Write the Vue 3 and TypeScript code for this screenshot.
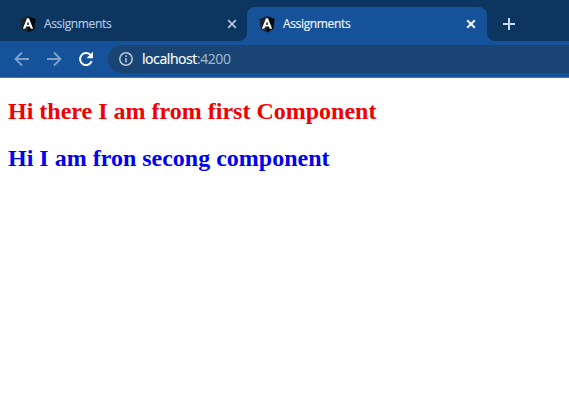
<script setup lang="ts">
interface Tab {
  id: number
  title: string
  active: boolean
}

const tabs: Tab[] = [
  { id: 1, title: 'Assignments', active: false },
  { id: 2, title: 'Assignments', active: true },
]
</script>

<template>
  <div class="browser">
    <header class="tab-strip">
      <div v-for="tab in tabs" :key="tab.id" class="tab" :class="{ active: tab.active }">
        <svg class="favicon" viewBox="0 0 16 17">
          <path d="M8 .3 15.5 3l-1.2 10L8 16.6 1.7 13 .5 3z" fill="#20242c" />
          <path d="M8 .3 15.5 3l-1.2 10L8 16.6z" fill="#080b12" />
          <path d="M7 2.2 2.9 12.8H5.3L6.1 10.6H9.9L10.7 12.8H13.1L9 2.2ZM8 5.4 9.2 8.7H6.8Z" fill="#fff" fill-rule="evenodd" />
        </svg>
        <span class="title">{{ tab.title }}</span>
        <svg class="close" viewBox="0 0 10 10">
          <path d="M1.2 1.2 8.8 8.8M8.8 1.2 1.2 8.8" />
        </svg>
      </div>
      <svg class="new-tab" viewBox="0 0 12 12">
        <path d="M6 0V12M0 6H12" />
      </svg>
    </header>

    <nav class="toolbar">
      <svg class="nav-icon dim" viewBox="0 0 16 16">
        <path d="M15 8H2M8 1.5 1.5 8 8 14.5" />
      </svg>
      <svg class="nav-icon dim" viewBox="0 0 16 16">
        <path d="M1 8H14M8 1.5 14.5 8 8 14.5" />
      </svg>
      <svg class="nav-icon reload" viewBox="0 0 16 16">
        <path d="M13.7 10.2A6 6 0 1 1 12.3 3.8" />
        <path class="head" d="M15 .8V7.3H8.5Z" />
      </svg>
      <div class="address">
        <svg class="info" viewBox="0 0 14 14">
          <circle cx="7" cy="7" r="6.2" />
          <path d="M7 6V10.5M7 3.3V4.9" />
        </svg>
        <span class="url">localhost<span class="port">:4200</span></span>
      </div>
    </nav>

    <main class="page">
      <h2 class="first">Hi there I am from first Component</h2>
      <h2 class="second">Hi I am fron secong component</h2>
    </main>
  </div>
</template>

<style>
body {
  margin: 0;
  background: #fff;
}
</style>

<style scoped>
.browser {
  height: 402px;
  overflow: hidden;
  background: #fff;
}

.tab-strip {
  display: flex;
  box-sizing: border-box;
  height: 41px;
  padding: 7px 0 0 8px;
  background: #0c355f;
}

.tab {
  position: relative;
  display: flex;
  align-items: center;
  box-sizing: border-box;
  width: 239px;
  height: 34px;
  padding: 0 10px 0 12px;
  color: #b5cbe2;
  font: 12px/16px "Open Sans", "Noto Sans", sans-serif;
}

.tab.active {
  width: 240px;
  border-radius: 8px 8px 0 0;
  background: #15529a;
  color: #f4f8fd;
}

.tab.active::before,
.tab.active::after {
  content: "";
  position: absolute;
  bottom: 0;
  width: 8px;
  height: 8px;
}

.tab.active::before {
  left: -8px;
  background: radial-gradient(circle at 0 0, transparent 7.5px, #15529a 8.2px);
}

.tab.active::after {
  right: -8px;
  background: radial-gradient(circle at 100% 0, transparent 7.5px, #15529a 8.2px);
}

.favicon {
  width: 16px;
  height: 17px;
}

.title {
  flex: 1;
  margin-left: 8px;
  letter-spacing: -0.35px;
  -webkit-text-stroke: 0.15px currentColor;
}

.close {
  width: 10px;
  height: 10px;
  fill: none;
  stroke: currentColor;
  stroke-width: 1.7;
}

.active .close {
  margin-right: 1px;
  stroke-width: 2;
}

.new-tab {
  width: 12px;
  height: 12px;
  margin: 11px 0 0 16px;
  stroke: #c9d9e9;
  stroke-width: 2;
}

.toolbar {
  display: flex;
  align-items: center;
  box-sizing: border-box;
  height: 37px;
  padding-left: 14px;
  border-bottom: 1px solid #4377b2;
  background: #15529a;
}

.nav-icon {
  width: 16px;
  height: 16px;
  margin-right: 16px;
  fill: none;
  stroke: #fff;
  stroke-width: 2;
}

.nav-icon.dim {
  stroke: #7ba1cc;
  stroke-width: 1.8;
}

.nav-icon.reload {
  margin-right: 14px;
}

.nav-icon .head {
  fill: #fff;
  stroke: none;
}

.address {
  display: flex;
  flex: 1;
  align-items: center;
  height: 28px;
  padding-left: 11px;
  border-radius: 14px 0 0 14px;
  background: #194473;
}

.info {
  width: 14px;
  height: 14px;
  fill: none;
  stroke: #b7c8da;
  stroke-width: 1.5;
}

.url {
  margin-left: 9px;
  color: #fff;
  font: 14px/20px "Open Sans", "Noto Sans", sans-serif;
  letter-spacing: -0.42px;
  -webkit-text-stroke: 0.15px currentColor;
}

.port {
  color: #9eb5ce;
}

.page {
  padding: 0 8px;
  font-family: "Liberation Serif", serif;
}

h2 {
  margin: 20px 0;
  font-size: 24px;
  line-height: 27px;
}

.first {
  color: #f00000;
}

.second {
  color: #0000f0;
}
</style>
